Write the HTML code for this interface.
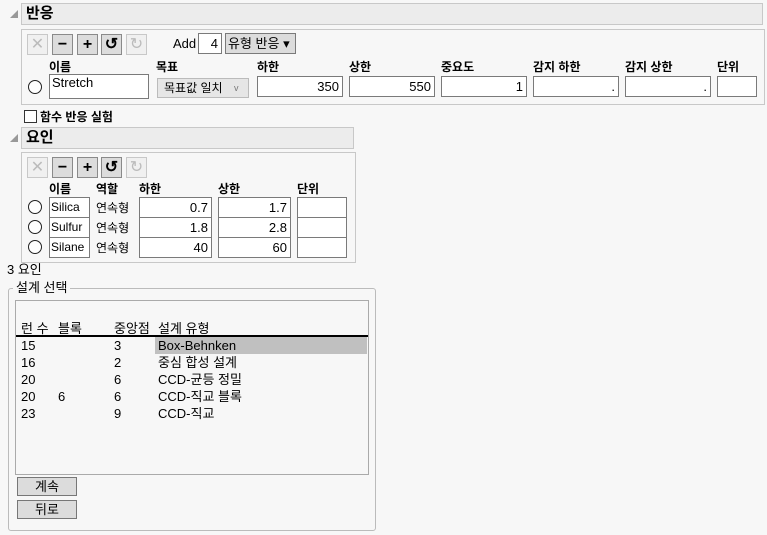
<!DOCTYPE html>
<html><head><meta charset="utf-8">
<style>
body{margin:0;width:767px;height:535px;background:#f7f7f7;position:relative;overflow:hidden;font-family:"Liberation Sans","Noto Sans CJK KR",sans-serif;font-size:12px;color:#000}
div,span{position:absolute;box-sizing:border-box}
.hdr{background:#ececec;border:1px solid #c8c8c8;font-weight:bold;font-size:15px;padding-left:4px;line-height:19px}
.tri{width:0;height:0;border-left:8px solid transparent;border-bottom:8px solid #999}
.panel{border:1px solid #c8c8c8;background:#f7f7f7}
.btn{width:21px;height:21px;border:1px solid #8a8a8a;background:#dcdcdc;text-align:center;line-height:19px;font-size:16px}
.btn.dis{border-color:#c8c8c8;background:#f0f0f0;color:#bbb}
.lbl{font-weight:bold;font-size:12px}
.in{background:#fff;border:1px solid #7a7a7a;height:21px;text-align:right;padding-right:3px;line-height:19px;font-size:13px;overflow:hidden}
.nm{font-size:12px;text-align:left;padding-left:1px}
.rad{width:14px;height:14px;border:1.5px solid #222;border-radius:50%;background:#fff}
.t{white-space:nowrap}
.r{font-size:13px;line-height:15px}
</style></head><body>
<div class="tri" style="left:10px;top:10px"></div>
<div class="hdr" style="left:21px;top:3px;width:742px;height:22px">반응</div>
<div class="panel" style="left:21px;top:29px;width:744px;height:76px"></div>
<div class="btn dis" style="left:27px;top:34px">✕</div>
<div class="btn" style="left:52px;top:34px;font-weight:bold">−</div>
<div class="btn" style="left:77px;top:34px;font-weight:bold">+</div>
<div class="btn" style="left:101px;top:34px;font-weight:bold">↺</div>
<div class="btn dis" style="left:126px;top:34px">↻</div>
<span class="t" style="left:173px;top:36px;font-size:13px">Add</span>
<div class="in" style="left:198px;top:33px;width:24px;font-size:13px">4</div>
<div style="left:225px;top:33px;width:71px;height:21px;border:1px solid #7a7a7a;background:#dcdcdc;font-size:13px;line-height:19px;padding-left:2px">유형 반응 ▾</div>
<span class="lbl t" style="left:49px;top:58px">이름</span>
<span class="lbl t" style="left:156px;top:58px">목표</span>
<span class="lbl t" style="left:257px;top:58px">하한</span>
<span class="lbl t" style="left:349px;top:58px">상한</span>
<span class="lbl t" style="left:441px;top:58px">중요도</span>
<span class="lbl t" style="left:533px;top:58px">감지 하한</span>
<span class="lbl t" style="left:625px;top:58px">감지 상한</span>
<span class="lbl t" style="left:717px;top:58px">단위</span>
<div class="rad" style="left:28px;top:80px"></div>
<div class="in" style="left:49px;top:74px;width:100px;height:25px;text-align:left;padding-left:2px;line-height:15px">Stretch</div>
<div style="left:157px;top:78px;width:92px;height:20px;border:1px solid #bbb;background:#e6e6e6;line-height:18px;padding-left:6px;font-size:12px">목표값 일치 <span style="left:76px;top:0;font-size:9px;color:#777">v</span></div>
<div class="in" style="left:257px;top:76px;width:86px">350</div>
<div class="in" style="left:349px;top:76px;width:86px">550</div>
<div class="in" style="left:441px;top:76px;width:86px">1</div>
<div class="in" style="left:533px;top:76px;width:86px">.</div>
<div class="in" style="left:625px;top:76px;width:86px">.</div>
<div class="in" style="left:717px;top:76px;width:40px"></div>
<div style="left:24px;top:110px;width:13px;height:13px;border:1px solid #333;background:#fff"></div>
<span class="t" style="left:40px;top:108px;font-size:12px;font-weight:bold">함수 반응 실험</span>
<div class="tri" style="left:10px;top:134px"></div>
<div class="hdr" style="left:21px;top:127px;width:333px;height:22px">요인</div>
<div class="panel" style="left:21px;top:152px;width:335px;height:111px"></div>
<div class="btn dis" style="left:27px;top:157px">✕</div>
<div class="btn" style="left:52px;top:157px;font-weight:bold">−</div>
<div class="btn" style="left:77px;top:157px;font-weight:bold">+</div>
<div class="btn" style="left:101px;top:157px;font-weight:bold">↺</div>
<div class="btn dis" style="left:126px;top:157px">↻</div>
<span class="lbl t" style="left:49px;top:180px">이름</span>
<span class="lbl t" style="left:96px;top:180px">역할</span>
<span class="lbl t" style="left:139px;top:180px">하한</span>
<span class="lbl t" style="left:218px;top:180px">상한</span>
<span class="lbl t" style="left:297px;top:180px">단위</span>
<div class="rad" style="left:28px;top:200px"></div>
<div class="in nm" style="left:49px;top:197px;width:41px">Silica</div>
<span class="t" style="left:96px;top:199px;font-size:12px">연속형</span>
<div class="in" style="left:139px;top:197px;width:73px">0.7</div>
<div class="in" style="left:218px;top:197px;width:73px">1.7</div>
<div class="in" style="left:297px;top:197px;width:50px"></div>
<div class="rad" style="left:28px;top:220px"></div>
<div class="in nm" style="left:49px;top:217px;width:41px">Sulfur</div>
<span class="t" style="left:96px;top:219px;font-size:12px">연속형</span>
<div class="in" style="left:139px;top:217px;width:73px">1.8</div>
<div class="in" style="left:218px;top:217px;width:73px">2.8</div>
<div class="in" style="left:297px;top:217px;width:50px"></div>
<div class="rad" style="left:28px;top:240px"></div>
<div class="in nm" style="left:49px;top:237px;width:41px">Silane</div>
<span class="t" style="left:96px;top:239px;font-size:12px">연속형</span>
<div class="in" style="left:139px;top:237px;width:73px">40</div>
<div class="in" style="left:218px;top:237px;width:73px">60</div>
<div class="in" style="left:297px;top:237px;width:50px"></div>
<span class="t r" style="left:7px;top:262px">3 요인</span>
<div style="left:8px;top:288px;width:368px;height:243px;border:1px solid #bbb;border-radius:3px"></div>
<span class="t r" style="left:13px;top:280px;background:#f7f7f7;padding:0 3px">설계 선택</span>
<div style="left:15px;top:300px;width:354px;height:175px;border:1px solid #aaa;background:#f7f7f7"></div>
<span class="t r" style="left:21px;top:321px">런 수</span>
<span class="t r" style="left:58px;top:321px">블록</span>
<span class="t r" style="left:114px;top:321px">중앙점</span>
<span class="t r" style="left:158px;top:321px">설계 유형</span>
<div style="left:16px;top:335px;width:352px;height:2px;background:#000"></div>
<div style="left:155px;top:337px;width:212px;height:17px;background:#c0c0c0"></div>
<span class="t r" style="left:21px;top:338px">15</span><span class="t r" style="left:114px;top:338px">3</span><span class="t r" style="left:158px;top:338px">Box-Behnken</span>
<span class="t r" style="left:21px;top:355px">16</span><span class="t r" style="left:114px;top:355px">2</span><span class="t r" style="left:158px;top:355px">중심 합성 설계</span>
<span class="t r" style="left:21px;top:372px">20</span><span class="t r" style="left:114px;top:372px">6</span><span class="t r" style="left:158px;top:372px">CCD-균등 정밀</span>
<span class="t r" style="left:21px;top:389px">20</span><span class="t r" style="left:58px;top:389px">6</span><span class="t r" style="left:114px;top:389px">6</span><span class="t r" style="left:158px;top:389px">CCD-직교 블록</span>
<span class="t r" style="left:21px;top:406px">23</span><span class="t r" style="left:114px;top:406px">9</span><span class="t r" style="left:158px;top:406px">CCD-직교</span>
<div style="left:17px;top:477px;width:60px;height:19px;border:1px solid #777;background:#dcdcdc;text-align:center;line-height:17px;font-size:13px">계속</div>
<div style="left:17px;top:500px;width:60px;height:19px;border:1px solid #777;background:#dcdcdc;text-align:center;line-height:17px;font-size:13px">뒤로</div>
</body></html>
